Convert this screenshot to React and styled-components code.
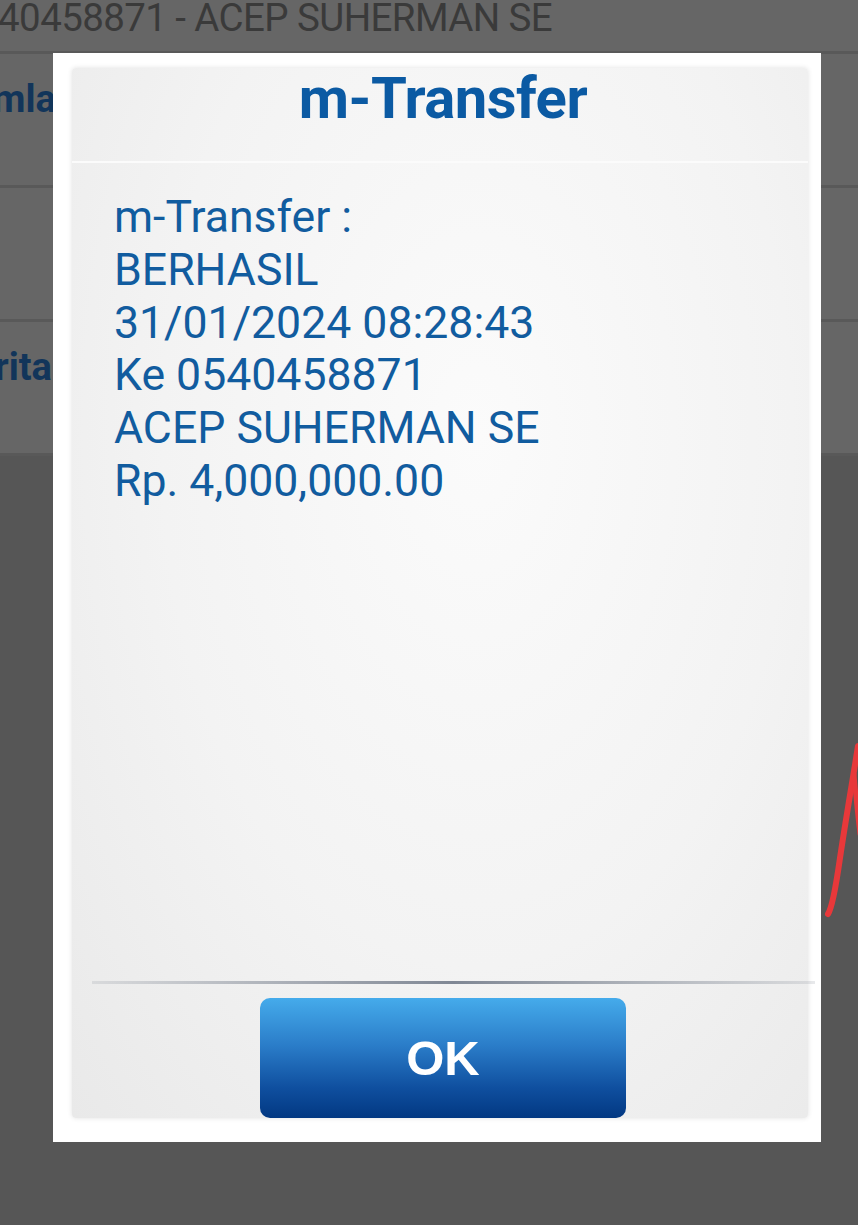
import styled, { createGlobalStyle } from "styled-components";

const GlobalStyle = createGlobalStyle`
    html, body {
        margin: 0;
        padding: 0;
        background: #565656;
        overflow: hidden;
    }

    * {
        box-sizing: border-box;
    }
`;

const lines = [
    "m-Transfer :",
    "BERHASIL",
    "31/01/2024 08:28:43",
    "Ke 0540458871",
    "ACEP SUHERMAN SE",
    "Rp. 4,000,000.00",
];

const App = () => {
    return (
        <>
            <GlobalStyle/>
            <PageS>
                <FormS>
                    <TopBarS>0540458871 - ACEP SUHERMAN SE</TopBarS>
                    <RowS>
                        <LabelS>Jumlah</LabelS>
                    </RowS>
                    <RowS/>
                    <RowS>
                        <LabelS>Berita</LabelS>
                    </RowS>
                </FormS>

                <DialogS>
                    <PanelS>
                        <TitleS>m-Transfer</TitleS>
                        <BodyS>
                            {lines.map((line) => (
                                <LineS key={line}>{line}</LineS>
                            ))}
                        </BodyS>
                        <DividerS/>
                        <FooterS>
                            <ButtonS>OK</ButtonS>
                        </FooterS>
                    </PanelS>
                </DialogS>

                <MarkS width="40" height="200" viewBox="0 0 40 200">
                    <path
                        d="M38 8 C33 40 26 80 20 120 C16 148 12 170 8 176"
                        fill="none"
                        stroke="#e8383a"
                        strokeWidth="6"
                        strokeLinecap="round"
                    />
                    <path
                        d="M34 36 C36 60 38 80 40 96"
                        fill="none"
                        stroke="#e8383a"
                        strokeWidth="5"
                        strokeLinecap="round"
                    />
                </MarkS>
            </PageS>
        </>
    );
};

const PageS = styled.div`
    position: relative;
    width: 858px;
    height: 1225px;
    overflow: hidden;
    background: #565656;
    font-family: Roboto, "Liberation Sans", sans-serif;
`;

const FormS = styled.div`
    display: flex;
    flex-direction: column;
    margin-left: -44px;
    background: #666666;
`;

const TopBarS = styled.div`
    height: 54px;
    font-size: 38.5px;
    line-height: 36px;
    color: #3a3a3a;
    white-space: nowrap;
    border-bottom: 3px solid #595959;
    letter-spacing: -0.6px;
`;

const RowS = styled.div`
    height: 134px;
    padding-top: 24px;
    border-bottom: 3px solid #595959;
`;

const LabelS = styled.div`
    margin-left: -6px;
    font-size: 38px;
    line-height: 42px;
    font-weight: bold;
    color: #12355a;
`;

const DialogS = styled.div`
    position: absolute;
    top: 53px;
    left: 53px;
    width: 768px;
    height: 1089px;
    display: flex;
    padding: 15px 13px 24px 19px;
    background: #ffffff;
`;

const PanelS = styled.div`
    flex: 1;
    display: flex;
    flex-direction: column;
    border-radius: 4px;
    background: radial-gradient(ellipse at 55% 35%, #fbfbfb 0%, #f3f3f3 55%, #e9e9e9 100%);
    box-shadow: 0 0 5px rgba(0, 0, 0, 0.12);
`;

const TitleS = styled.div`
    height: 95px;
    display: flex;
    align-items: center;
    justify-content: center;
    padding: 0 0 34px 6px;
    font-size: 58px;
    font-weight: bold;
    color: #0b5aa3;
    letter-spacing: -0.5px;
    border-bottom: 2px solid #fbfbfb;
`;

const BodyS = styled.div`
    flex: 1;
    padding: 28px 0 0 42px;
    color: #115c9f;
`;

const LineS = styled.div`
    font-size: 44.6px;
    line-height: 52.8px;
    white-space: nowrap;
`;

const DividerS = styled.div`
    height: 3px;
    margin: 0 -7px 0 20px;
    background: linear-gradient(to right, rgba(140, 146, 156, 0.2), #7f8794 50%, rgba(140, 146, 156, 0.2));
`;

const FooterS = styled.div`
    display: flex;
    justify-content: center;
    padding: 14px 0 0 6px;
`;

const ButtonS = styled.button`
    width: 366px;
    height: 120px;
    border: none;
    border-radius: 10px;
    background: linear-gradient(to bottom, #45abeb 0%, #2a7cc8 40%, #0f4f9f 75%, #023882 100%);
    color: #ffffff;
    font-family: "Liberation Sans", Arial, sans-serif;
    font-size: 49px;
    font-weight: bold;
    padding: 0;
    cursor: pointer;
`;

const MarkS = styled.svg`
    position: absolute;
    top: 738px;
    left: 820px;
`;

export default App;
